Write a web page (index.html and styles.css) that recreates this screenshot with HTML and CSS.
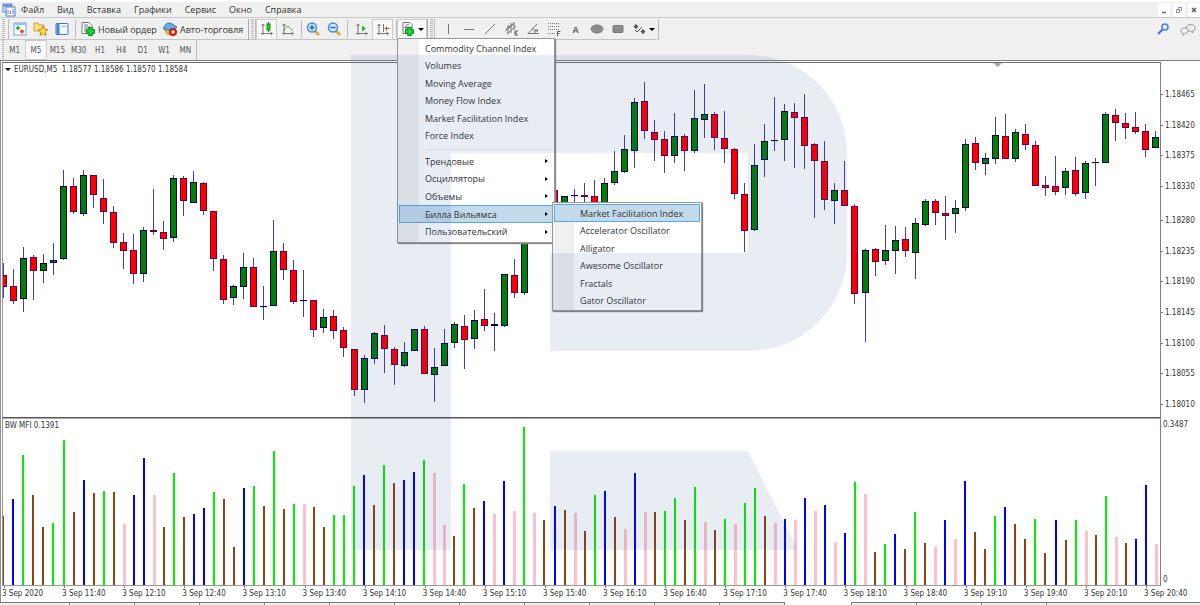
FILE: index.html
```html
<!DOCTYPE html>
<html lang="ru">
  <head>
    <meta charset="UTF-8" />
    <meta name="viewport" content="width=device-width, initial-scale=1.0" />
    <title>EURUSD,M5</title>
    <link rel="stylesheet" href="styles.css">
  </head>
  <body>
    <header>
      <nav class="menubar">
        <svg class="app-icon" viewBox="0 0 14 14">
          <rect x="1" y="1" width="9" height="8" fill="#dce9fb" stroke="#5b8bd6" />
          <path d="M1 2.500h9" stroke="#5b8bd6" stroke-width="2" />
          <rect x="4" y="4" width="9" height="9" fill="#fff" stroke="#4a7fd0" />
          <path d="M6 11V7M8.500 11V8M11 11V6" stroke="#4a7fd0" />
        </svg>
        <button>Файл</button>
        <button>Вид</button>
        <button>Вставка</button>
        <button>Графики</button>
        <button>Сервис</button>
        <button>Окно</button>
        <button>Справка</button>
        <div class="window-buttons">
          <button aria-label="Свернуть"><svg viewBox="0 0 12 12"><path d="M4 8.500h4" stroke="#5a6b80" stroke-width="1.500" /></svg></button>
          <button aria-label="Восстановить"><svg viewBox="0 0 12 12"><path d="M5.500 6V3.500h3v3H7.500M3.500 5.500h3v3h-3z" fill="none" stroke="#7a8aa0" /></svg></button>
          <button aria-label="Закрыть"><svg viewBox="0 0 12 12"><path d="M4 4l4 4M8 4L4 8" stroke="#4a5a70" stroke-width="1.500" /></svg></button>
        </div>
      </nav>

      <div class="toolbar">
        <span class="grip"></span>
        <button class="tool" aria-label="Обзор рынка">
          <svg viewBox="0 0 16 16"><rect x="2" y="2" width="12" height="12" fill="#fff" stroke="#6fa3d8" /><path d="M2 3h12" stroke="#8cc0ee" stroke-width="2" /><path d="M6 4.500l2.500 2.500L6 9.500 3.500 7z" fill="#35b535" /><path d="M10 8l2.500 2.500L10 13l-2.500-2.500z" fill="#e05530" /></svg>
        </button>
        <button class="tool" aria-label="Навигатор">
          <svg viewBox="0 0 16 16"><path d="M1 2h4l1 2h5v6H1z" fill="#f7df82" stroke="#c9a53a" /><path d="M10 5l1.500 3.200 3.500.4-2.600 2.400.8 3.500-3.200-1.800-3.100 1.800.7-3.500L5 8.600l3.500-.4z" fill="#ffd84a" stroke="#b98e23" /></svg>
        </button>
        <button class="tool" aria-label="Терминал">
          <svg viewBox="0 0 16 16"><rect x="2" y="2.500" width="12" height="11" rx="1" fill="#eef6ff" stroke="#3f78c0" /><path d="M4 3v10" stroke="#4a86cf" stroke-width="3" /><path d="M7.500 5.500h5" stroke="#9bb" /></svg>
        </button>
        <span class="separator"></span>
        <button class="text-tool order">
          <svg viewBox="0 0 16 16"><path d="M2 1.500h7l3 3v8H2z" fill="#fff" stroke="#777" /><path d="M4 4h4M4 6h6M4 8h4M4 10h3" stroke="#777" /><path d="M10.500 6v9M6 10.500h9" stroke="#078a1a" stroke-width="4.500" /><path d="M10.500 7v7M7 10.500h7" stroke="#22d43a" stroke-width="2.500" /></svg>
          Новый ордер
        </button>
        <button class="text-tool">
          <svg viewBox="0 0 16 16"><path d="M2 8l3 5 6 1 3-5z" fill="#f4c448" stroke="#c58d1c" /><path d="M1 7c2-1 2-5 6-5s5 3 8 4c-3 4-11 4-14 1z" fill="#5fb0e5" stroke="#2b78b5" /><circle cx="11" cy="11" r="4" fill="#d7190d" /><rect x="9.500" y="9.500" width="3" height="3" fill="#fff" /></svg>
          Авто-торговля
        </button>
        <span class="grip edge"></span>
        <button class="tool pressed" aria-label="Свечи">
          <svg viewBox="0 0 16 16"><path d="M4 3v11M2 12.500h11M2.500 5L4 3l1.500 2M11.500 11l2 1.500-2 1.500" fill="none" stroke="#777" /><path d="M9.500 1v10" stroke="#0a8a0a" /><rect x="8" y="3" width="3" height="6" fill="#3c3" stroke="#0a8a0a" /></svg>
        </button>
        <button class="tool" aria-label="Линия">
          <svg viewBox="0 0 16 16"><path d="M4 3v11M2 12.500h11M2.500 5L4 3l1.500 2M11.500 11l2 1.500-2 1.500" fill="none" stroke="#777" /><path d="M4 10c1-4 4-5 5-4s2 3 4 3" fill="none" stroke="#4a9a4a" /></svg>
        </button>
        <span class="separator thin"></span>
        <button class="tool" aria-label="Увеличить">
          <svg viewBox="0 0 16 16"><path d="M10 10l4 4" stroke="#d3b344" stroke-width="3" /><circle cx="7" cy="6.500" r="4.500" fill="#d2e8fc" stroke="#4a8cd0" stroke-width="1.500" /><path d="M4.500 6.500h5M7 4v5" stroke="#2467b0" stroke-width="1.500" /></svg>
        </button>
        <button class="tool" aria-label="Уменьшить">
          <svg viewBox="0 0 16 16"><path d="M10 10l4 4" stroke="#d3b344" stroke-width="3" /><circle cx="7" cy="6.500" r="4.500" fill="#d2e8fc" stroke="#4a8cd0" stroke-width="1.500" /><path d="M4.500 6.500h5" stroke="#2467b0" stroke-width="1.500" /></svg>
        </button>
        <span class="separator"></span>
        <button class="tool" aria-label="Автопрокрутка">
          <svg viewBox="0 0 16 16"><path d="M4 3v11M2 12.500h11M2.500 5L4 3l1.500 2M11.500 11l2 1.500-2 1.500" fill="none" stroke="#777" /><path d="M8 4.500l4 3-4 3z" fill="#2ab52a" /></svg>
        </button>
        <button class="tool pressed" aria-label="Сдвиг графика">
          <svg viewBox="0 0 16 16"><path d="M4 3v11M2 12.500h11M2.500 5L4 3l1.500 2M11.500 11l2 1.500-2 1.500M8.500 3v8" fill="none" stroke="#777" /><path d="M9.500 7.500h5M11.500 5.500v4" stroke="#c65a3a" /></svg>
        </button>
        <span class="separator thin"></span>
        <div class="dropdown">
          <button class="split-tool pressed" aria-label="Индикаторы">
            <svg viewBox="0 0 16 16"><path d="M3 1.500h7l2 2v9H3z" fill="#fff" stroke="#777" /><path d="M6 10V5c0-1.500 2-1.500 3-1M4.500 6.500h4" fill="none" stroke="#666" /><path d="M9.500 6v9M5 10.500h9" stroke="#078a1a" stroke-width="4.500" /><path d="M9.500 7v7M6 10.500h7" stroke="#22d43a" stroke-width="2.500" /></svg>
            <span class="caret"></span>
          </button>
          <div class="menu">
            <ul class="menu-recent">
              <li><button>Commodity Channel Index</button></li>
              <li><button>Volumes</button></li>
              <li><button>Moving Average</button></li>
              <li><button>Money Flow Index</button></li>
              <li><button>Market Facilitation Index</button></li>
              <li><button>Force Index</button></li>
            </ul>
            <ul class="menu-groups">
              <li><button class="parent">Трендовые</button></li>
              <li><button class="parent">Осцилляторы</button></li>
              <li><button class="parent">Объемы</button></li>
              <li class="open">
                <button class="parent active">Билла Вильямса</button>
                <div class="menu submenu">
                  <ul class="menu-recent">
                    <li><button class="active">Market Facilitation Index</button></li>
                    <li><button>Accelerator Oscillator</button></li>
                    <li><button>Alligator</button></li>
                    <li><button>Awesome Oscillator</button></li>
                    <li><button>Fractals</button></li>
                    <li><button>Gator Oscillator</button></li>
                  </ul>
                </div>
              </li>
              <li><button class="parent">Пользовательский</button></li>
            </ul>
          </div>
        </div>
        <span class="grip edge"></span>
        <div class="draw-tools">
          <button aria-label="Вертикальная линия"><svg viewBox="0 0 16 16"><path d="M8.500 3v10" stroke="#777" /></svg></button>
          <button aria-label="Горизонтальная линия"><svg viewBox="0 0 16 16"><path d="M3 8.500h10" stroke="#777" /></svg></button>
          <button aria-label="Трендовая линия"><svg viewBox="0 0 16 16"><path d="M3 13L13 3" stroke="#777" /></svg></button>
          <button aria-label="Канал"><svg viewBox="0 0 16 16"><path d="M1 10L10 3M3 13l9-8M4 4v9M7 2v10M10 1v8M2 8l8-6" stroke="#777" /><path d="M14 10h-3v4h3M11 12h2" fill="none" stroke="#555" /></svg></button>
          <button aria-label="Угол"><svg viewBox="0 0 16 16"><path d="M12 3L3 12.500h11M7 8c2 1 3 2 3 4" fill="none" stroke="#777" /><path d="M10 9.500h3" stroke="#777" stroke-width="2" /></svg></button>
          <button aria-label="Фибоначчи"><svg viewBox="0 0 16 16"><path d="M2 2.500h12M2 5.500h12M2 8.500h12M2 12.500h7" stroke="#777" stroke-dasharray="1 1" /><path d="M11.500 15v-4.500h3M11.500 12.500h2" fill="none" stroke="#555" /></svg></button>
          <button aria-label="Текст" class="letter">A</button>
          <button aria-label="Эллипс"><svg viewBox="0 0 16 16"><ellipse cx="8" cy="8" rx="6" ry="4" fill="#8c8c8c" stroke="#777" /></svg></button>
          <button aria-label="Прямоугольник"><svg viewBox="0 0 16 16"><rect x="3" y="4.500" width="10" height="7" rx="1" fill="#8c8c8c" stroke="#777" /></svg></button>
        </div>
        <button class="split-tool last" aria-label="Стрелки">
          <svg viewBox="0 0 16 16"><path d="M5 3l2.500 2.500L5 8 2.500 5.500zM12 8l2.500 2.500L12 13l-2.500-2.500z" fill="#555" /><path d="M4 9l2 2 5-5" fill="none" stroke="#555" /></svg>
          <span class="caret"></span>
        </button>
        <div class="right-tools">
          <button aria-label="Поиск"><svg viewBox="0 0 16 16"><path d="M8 8l-5 5" stroke="#3f6fc8" stroke-width="2" /><circle cx="10" cy="6" r="3" fill="#e6f0ff" stroke="#4f7fd8" stroke-width="1.500" /></svg></button>
          <button aria-label="Чат"><svg viewBox="0 0 18 16"><path d="M12 3c3 0 5 1.500 5 4s-1 3-3 3.500l.500 2-2.500-2c-3 0-5-1-5-3.500s2-4 5-4z" fill="#eee" stroke="#888" /><path d="M5 7c2.500 0 4 1 4 3s-1.500 3-4 3l-1.500 2v-2.300C2 12.500 1 11.500 1 10c0-2 1.500-3 4-3z" fill="#f6f6f6" stroke="#888" /></svg></button>
        </div>
      </div>

      <div class="timeframes">
        <span class="grip"></span>
        <div class="timeframe-list">
          <button>M1</button>
          <button class="pressed">M5</button>
          <button>M15</button>
          <button>M30</button>
          <button>H1</button>
          <button>H4</button>
          <button>D1</button>
          <button>W1</button>
          <button>MN</button>
        </div>
      </div>
    </header>

    <main class="chart-window">
      <section class="pane price-pane">
        <svg id="candles" viewBox="3 63 1157 354" preserveAspectRatio="none"></svg>
        <h1 class="pane-title"><span class="caret"></span>EURUSD,M5&nbsp; 1.18577 1.18586 1.18570 1.18584</h1>
      </section>
      <ul class="price-scale">
        <li>1.18465</li>
        <li>1.18420</li>
        <li>1.18375</li>
        <li>1.18330</li>
        <li>1.18280</li>
        <li>1.18235</li>
        <li>1.18190</li>
        <li>1.18145</li>
        <li>1.18100</li>
        <li>1.18055</li>
        <li>1.18010</li>
      </ul>
      <section class="pane indicator-pane">
        <svg id="histogram" viewBox="3 419 1157 166" preserveAspectRatio="none"></svg>
        <h2 class="pane-title">BW MFI 0.1391</h2>
      </section>
      <div class="indicator-scale">
        <span>0.3487</span>
        <span>0</span>
      </div>
      <ul class="time-scale" id="times"></ul>
    </main>

    <footer class="chart-tabs" id="tabs"></footer>

    <svg class="watermark" viewBox="0 0 496 496">
      <path d="M0 0H398A98 98 0 0 1 496 98V198A98 98 0 0 1 398 296H199V198H397V98H100V495H0z" />
      <path d="M199 396H397L447 495H199z" />
    </svg>

    <script src="script.js"></script>
  </body>
</html>
```
FILE: styles.css
```css
* {
  box-sizing: border-box;
}
body {
  margin: 0;
  height: 100vh;
  display: flex;
  flex-direction: column;
  position: relative;
  overflow: hidden;
  background-color: #fff;
  color: #333;
  font-family: "Open Sans", "Noto Sans", sans-serif;
  font-size: 9px;
}
button {
  font: inherit;
  color: inherit;
  background: none;
  border: 0;
  padding: 0;
  margin: 0;
  white-space: nowrap;
}
ul {
  list-style: none;
  margin: 0;
  padding: 0;
}
header {
  background-color: #f0f0f0;
  border-top: 2px solid #fff;
}
svg {
  display: block;
}

.menubar {
  display: flex;
  align-items: center;
  gap: 13px;
  height: 16px;
  padding-left: 2px;
  border-bottom: 1px solid #c8c8c8;
}
.app-icon {
  width: 14px;
  height: 14px;
  margin-right: -8px;
}
.window-buttons {
  display: flex;
  gap: 3px;
  margin-left: auto;
}
.window-buttons button {
  background-color: #fff;
  width: 12px;
  height: 14px;
}

.toolbar {
  display: flex;
  align-items: center;
  height: 22px;
  background: linear-gradient(#c4c4c4, #c4c4c4) 0 100% / 659px 1px no-repeat;
}
.toolbar svg {
  width: 16px;
  height: 16px;
  flex: none;
}
.grip {
  width: 9px;
  height: 21px;
  border-right: 1px solid #bbb;
  background: repeating-linear-gradient(#bbb 0 1px, #eee 1px 2px) 2px 0 / 3px 100% no-repeat;
}
.grip.edge {
  width: 8px;
  border-left: 1px solid #aaa;
}
.separator {
  width: 7px;
  height: 18px;
  background: linear-gradient(#bbb, #bbb) 3px 0 / 1px 100% no-repeat;
}
.separator.thin {
  width: 4px;
}
.tool {
  display: flex;
  align-items: center;
  justify-content: center;
  width: 21px;
  height: 21px;
}
.pressed {
  background-color: #f8f8f8;
  border: 1px solid #ccc;
}
.text-tool {
  display: flex;
  align-items: center;
  gap: 2px;
  width: 86px;
}
.text-tool.order {
  width: 83px;
  padding-left: 1px;
}
.split-tool {
  display: flex;
  align-items: center;
  gap: 2px;
  width: 30px;
  height: 21px;
  padding-left: 2px;
}
.split-tool.last {
  border-right: 1px solid #bbb;
}
.caret {
  border: 3px solid transparent;
  border-top-color: #000;
  border-bottom: 0;
}
.draw-tools {
  display: flex;
  width: 192px;
  margin-left: 2px;
}
.draw-tools button {
  flex: 1;
  display: flex;
  align-items: center;
  justify-content: center;
}
.letter {
  font-weight: bold;
  color: #666;
}
.right-tools {
  display: flex;
  gap: 9px;
  margin-left: auto;
  padding-right: 4px;
}

.timeframes {
  display: flex;
  height: 20px;
  width: 197px;
  border-right: 1px solid #bbb;
  color: #555;
  font-family: "DejaVu Sans Condensed", "DejaVu Sans", sans-serif;
  font-size: 8px;
}
.timeframes .grip {
  width: 4px;
  border-right: 0;
}
.timeframe-list {
  flex: 1;
  display: grid;
  grid-template-columns: repeat(9, 1fr);
}

/* indicator menu */
.dropdown {
  position: relative;
}
.menu {
  position: absolute;
  z-index: 1;
  top: 19px;
  left: 0;
  width: 158px;
  padding: 1px;
  background: linear-gradient(90deg, #f0f0f0 21px, #fff 21px);
  border: 1px solid #999;
  box-shadow: 1px 1px 1px #888;
}
.menu-recent,
.menu-groups {
  display: grid;
  grid-auto-rows: 1fr;
}
.menu-recent {
  height: 105px;
}
.menu-groups {
  height: 88px;
  margin-top: 8px;
  position: relative;
}
.menu-groups::before {
  content: "";
  position: absolute;
  top: -4px;
  left: 26px;
  right: 0;
  border-top: 1px solid #f0f0f0;
}
.menu li {
  display: flex;
}
.menu li button {
  flex: 1;
  display: flex;
  align-items: center;
  justify-content: space-between;
  padding: 0 4px 0 25px;
  border: 1px solid transparent;
}
.menu .parent::after {
  content: "";
  border: 2px solid transparent;
  border-left: 3px solid #000;
  border-right: 0;
}
.menu .active {
  background-color: #c3daeb;
  border-color: #5aa7e4;
}
.menu .open {
  position: relative;
}
.menu .submenu {
  top: -3px;
  left: 153px;
  width: 150px;
}

/* chart */
.chart-window {
  flex: 1;
  display: grid;
  grid-template-columns: 1fr 39px;
  grid-template-rows: 356px 168px 1fr;
  border-top: 1px solid #808080;
  border-left: 1px solid #909090;
  padding: 1px 0 0 1px;
  font-family: "DejaVu Sans Condensed", "DejaVu Sans", sans-serif;
  font-size: 8px;
  line-height: 12px;
}
.pane {
  position: relative;
  border-left: 1px solid #999;
  border-right: 1px solid #808080;
}
.pane svg {
  width: 100%;
  height: 100%;
}
.price-pane {
  border-top: 1px solid #707070;
  border-bottom: 1px solid #555;
}
.indicator-pane {
  border-top: 1px solid #aaa;
  border-bottom: 1px solid #999;
}
.pane-title {
  position: absolute;
  top: 1px;
  left: 2px;
  margin: 0;
  font-size: 8px;
  font-weight: normal;
}
.price-pane .caret {
  display: inline-block;
  vertical-align: middle;
  margin-right: 3px;
}
.price-scale {
  display: grid;
  grid-template-rows: 45fr 45fr 45fr 50fr 45fr 45fr 45fr 45fr 45fr 45fr 12px;
  padding: 27px 0 7px;
}
.price-scale li::before {
  content: "";
  display: inline-block;
  vertical-align: middle;
  width: 2px;
  margin-right: 2px;
  border-top: 1px solid #777;
}
.indicator-scale {
  display: flex;
  flex-direction: column;
  justify-content: space-between;
  padding: 1px 0 0 2px;
}
.time-scale {
  grid-column: 1 / 3;
  display: grid;
  grid-template-columns: repeat(19, 1fr) 56px;
}
.time-scale li {
  white-space: nowrap;
}
.time-scale li::before {
  content: "";
  display: block;
  height: 2px;
  width: 2px;
  border-right: 1px solid #777;
}
.candle-up {
  fill: #008000;
  stroke: #00005a;
}
.candle-down {
  fill: #ff0000;
  stroke: #60004a;
}
.wick {
  stroke: #4040a8;
}
.shift-mark {
  fill: #aaa;
}
.bar-green {
  fill: #00f000;
}
.bar-brown {
  fill: #8b4513;
}
.bar-blue {
  fill: #0000ff;
}
.bar-pink {
  fill: #ffc0cb;
}

.chart-tabs {
  display: flex;
  height: 3px;
  padding-left: 5px;
  background: #f0f0f0;
  border-top: 1px solid #777;
}
.chart-tabs span {
  width: 65px;
  border-right: 1px solid #888;
}
.chart-tabs .current {
  width: 67px;
  margin-top: -1px;
  background-color: #fff;
}

.watermark {
  position: absolute;
  z-index: 2;
  top: 55px;
  left: 351px;
  width: 496px;
  height: 496px;
  fill: rgba(30, 80, 150, 0.1);
  pointer-events: none;
}
```
FILE: script.js
```js
const STEP = 10.02;

// u = up, d = down; high, body top, body bottom, low
const candles = `d 263 275 287 298,d 269 286 301 304,u 247 258 299 312,d 255 257 271 300,u 254 263 271 283,u 243 260 263 275,
u 170 186 259 260,d 178 186 212 214,u 170 175 214 216,d 175 175 195 208,d 179 198 212 224,d 206 212 243 248,
d 233 242 251 269,d 234 250 274 284,u 227 230 274 282,d 189 230 232 235,d 221 232 239 250,u 175 178 238 242,
d 176 178 201 216,u 171 182 203 203,d 182 183 211 215,d 211 211 259 271,d 255 259 300 304,u 285 286 298 305,
u 253 267 287 299,d 258 267 307 307,u 286 306 306 320,u 220 251 306 306,d 243 251 270 280,d 260 270 302 304,
u 270 300 300 317,d 300 300 330 337,u 309 317 328 333,d 310 316 331 339,d 327 330 348 357,d 349 349 390 396,
u 355 358 390 403,u 332 333 359 364,d 325 335 349 373,d 347 349 365 385,u 342 352 366 367,u 329 329 351 351,
d 326 329 374 374,u 348 367 375 402,u 329 343 366 366,u 322 324 343 348,d 315 326 340 369,u 310 320 339 349,
d 289 319 326 331,u 313 324 326 351,u 274 274 326 327,d 259 275 293 298,u 200 220 293 295,u 195 205 220 225,
u 190 195 205 210,d 190 190 215 215,u 196 196 210 210,u 189 195 195 204,d 183 195 197 204,d 180 196 205 208,
u 178 183 205 208,u 151 171 183 185,u 135 149 172 173,u 98 102 151 168,d 82 101 131 139,d 120 132 140 161,
d 131 139 156 173,u 113 136 156 163,d 134 136 151 171,u 90 118 151 153,u 84 114 120 138,d 112 114 138 150,
d 111 138 149 163,d 148 149 194 199,d 183 194 231 252,u 144 165 230 231,u 124 141 160 177,u 97 140 141 151,
u 104 111 140 161,d 103 112 118 168,d 94 117 146 169,d 143 144 161 218,d 141 161 200 210,u 183 190 201 224,
d 161 190 206 206,d 204 206 294 304,u 249 250 293 342,d 248 249 262 276,u 225 250 261 265,u 226 240 251 274,
d 227 239 251 257,u 218 223 253 279,u 199 201 225 226,d 199 201 213 225,d 196 213 216 240,u 200 208 214 233,
u 139 144 208 211,d 137 143 163 170,u 153 158 164 175,u 117 135 159 164,d 114 136 159 159,u 129 132 159 162,
d 124 134 145 150,d 141 145 186 186,d 176 185 188 196,d 156 186 192 195,u 168 171 188 195,d 157 170 194 196,
u 161 163 193 199,u 158 162 162 186,u 112 114 163 163,d 109 115 123 141,d 113 123 128 139,d 112 127 132 134,
d 124 131 150 157,u 131 137 148 148`;

// g = green, n = brown, b = blue, p = pink; top of the bar
const bars = `n516 b499 g455 n495 n527 g523 g440 n512 b480 n493 g491 n492 p524 b495 b458 p495 n527 g473 n517 b514
b508 g492 n499 n547 b488 g486 n506 g451 n509 g504 p504 n507 n527 g515 g515 g486 b475 n505 g465 n483
b480 b472 g460 p473 p525 n536 g484 n508 b501 p514 b481 p511 g427 p513 n520 b506 n510 p513 n531 g495
b491 n517 p529 b473 p512 n512 g511 g498 n520 g487 p522 n530 g519 p524 g503 g488 n516 p523 b519 p520
b498 p511 b505 p542 b533 g482 p494 n552 g544 b534 n549 g512 n543 p547 b520 p539 b481 n532 n549 g516
b507 n524 n539 g519 n553 b520 n540 g520 p531 n535 g496 p537 n543 b539 b485 p544`;

const colors = { g: "green", n: "brown", b: "blue", p: "pink" };

function drawCandles() {
  let html = '<path class="shift-mark" d="M993 63h9l-4 4z"/>';
  candles.split(",").forEach((row, i) => {
    const [dir, high, top, bottom, low] = row.trim().split(" ");
    const x = Math.floor(3.3 + i * STEP) + 0.5;
    const name = dir === "u" ? "candle-up" : "candle-down";
    html += `<path class="wick" d="M${x} ${high}V${low}"/>`;
    html += `<rect class="${name}" x="${x - 3}" y="${+top + 0.5}" width="6" height="${Math.max(bottom - top - 1, 0.1)}"/>`;
  });
  document.getElementById("candles").innerHTML = html;
}

function drawBars() {
  let html = "";
  bars.split(/\s+/).forEach((bar, i) => {
    const kind = bar[0];
    const top = +bar.slice(1);
    const width = kind === "p" ? 3 : 2;
    const x = Math.round(2.4 + i * STEP);
    html += `<rect class="bar-${colors[kind]}" x="${x}" y="${top}" width="${width}" height="${585 - top}"/>`;
  });
  document.getElementById("histogram").innerHTML = html;
}

function drawTimes() {
  let html = "<li>3 Sep 2020</li>";
  for (let i = 1; i < 20; i++) {
    const minutes = 11 * 60 + 10 + i * 30;
    const hour = Math.floor(minutes / 60);
    html += `<li>3 Sep ${hour}:${minutes % 60}</li>`;
  }
  document.getElementById("times").innerHTML = html;
}

function drawTabs() {
  let html = "";
  for (let i = 0; i < 16; i++) {
    html += i === 12 ? '<span class="current"></span>' : "<span></span>";
  }
  document.getElementById("tabs").innerHTML = html;
}

drawCandles();
drawBars();
drawTimes();
drawTabs();
```
